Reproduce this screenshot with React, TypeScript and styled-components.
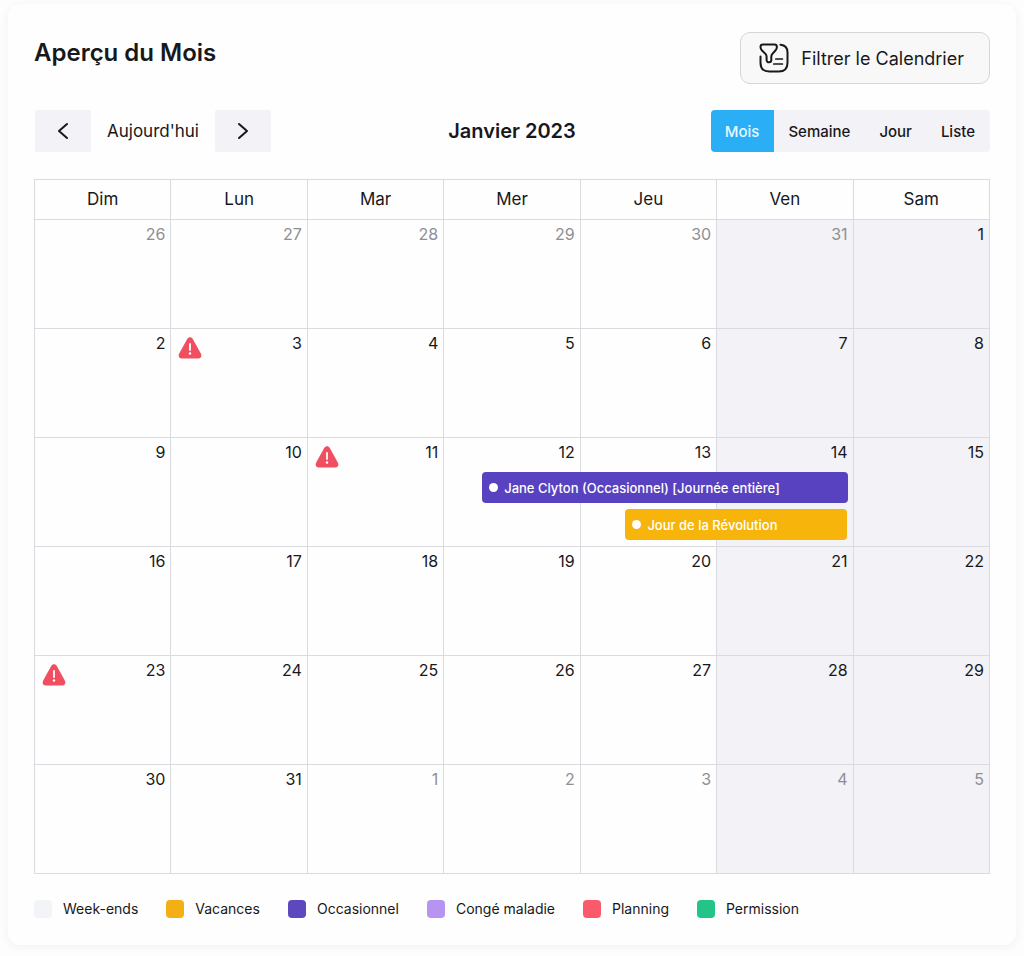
import React from "react";
import styled, { createGlobalStyle } from "styled-components";

const LINE = "#dadae1";
const SOFT = "#f2f2f7";
const INK = "#18181b";

const GlobalStyle = createGlobalStyle`
  * { box-sizing: border-box; }
  body {
    margin: 0;
    background: #fdfdfd;
    color: ${INK};
    font-family: Inter, "Liberation Sans", sans-serif;
  }
  button { font-family: inherit; color: inherit; cursor: pointer; }
`;

const Page = styled.div`
  padding: 4px 8px 10px;
`;

const Card = styled.main`
  padding: 28px 26px 26px;
  border-radius: 12px;
  background: #fefefe;
  box-shadow: 0 2px 10px rgba(0, 0, 0, 0.05);
`;

const Header = styled.header`
  display: flex;
  align-items: center;
  justify-content: space-between;
`;

const Title = styled.h1`
  margin: 0 0 10px;
  font-size: 24px;
  line-height: 32px;
  font-weight: 600;
`;

const FilterButton = styled.button`
  display: flex;
  align-items: center;
  gap: 12px;
  height: 52px;
  padding: 0 25px 0 18px;
  border: 1px solid #d6d6d9;
  border-radius: 10px;
  background: #f8f8f8;
  font-size: 18px;
`;

const Toolbar = styled.div`
  display: grid;
  grid-template-columns: 1fr auto 1fr;
  align-items: center;
  margin: 26px 0 27px;
`;

const Navigation = styled.div`
  display: flex;
  align-items: center;
  padding-left: 1px;
`;

const ArrowButton = styled.button`
  display: flex;
  align-items: center;
  justify-content: center;
  width: 56px;
  height: 42px;
  padding: 0;
  border: 0;
  border-radius: 2px;
  background: ${SOFT};
`;

const TodayButton = styled.button`
  height: 42px;
  padding: 0 16px;
  border: 0;
  background: none;
  font-size: 17px;
`;

const Period = styled.h2`
  margin: 0;
  font-size: 20px;
  line-height: 24px;
  font-weight: 600;
`;

const Views = styled.div`
  display: flex;
  justify-self: end;
  overflow: hidden;
  border-radius: 4px;
  background: ${SOFT};
`;

const ViewButton = styled.button<{ $active?: boolean }>`
  height: 42px;
  padding: 0 15px 0 14px;
  border: 0;
  background: ${(p) => (p.$active ? "#2aaef6" : "transparent")};
  color: ${(p) => (p.$active ? "#e6f8ff" : INK)};
  font-size: 15px;
  font-weight: 500;
`;

const Month = styled.table`
  width: 100%;
  table-layout: fixed;
  border-collapse: collapse;
`;

const DayName = styled.th`
  height: 40px;
  padding: 0 0 2px;
  border: 1px solid ${LINE};
  font-size: 17px;
  font-weight: 400;
`;

const DayCell = styled.td<{ $weekend: boolean }>`
  padding: 0;
  border: 1px solid ${LINE};
  background: ${(p) => (p.$weekend ? SOFT : "transparent")};
`;

const Day = styled.div`
  position: relative;
  height: 108px;
  padding: 3px 5px;
`;

const DayNumber = styled.div<{ $muted: boolean }>`
  text-align: right;
  font-size: 16px;
  line-height: 22px;
  color: ${(p) => (p.$muted ? "#8e8e96" : INK)};
`;

const Alert = styled.svg`
  position: absolute;
  top: 8px;
  left: 7px;
`;

const Event = styled.div<{ $color: string; $slot: number; $start: number; $span: number }>`
  position: absolute;
  z-index: 1;
  top: ${(p) => 34 + p.$slot * 37}px;
  left: ${(p) => p.$start}%;
  width: ${(p) => p.$span}%;
  display: flex;
  align-items: center;
  gap: 6px;
  height: 31px;
  padding: 0 7px;
  border-radius: 4px;
  background: ${(p) => p.$color};
  color: #fff;
  font-size: 13px;
  font-weight: 500;
  white-space: nowrap;
`;

const Dot = styled.span`
  width: 9px;
  height: 9px;
  border-radius: 50%;
  background: #fff;
`;

const Legend = styled.ul`
  display: flex;
  flex-wrap: wrap;
  gap: 12px 28px;
  margin: 25px 0 0;
  padding: 0;
  list-style: none;
`;

const LegendItem = styled.li`
  display: flex;
  align-items: center;
  gap: 11px;
  font-size: 14px;
  line-height: 20px;
`;

const Swatch = styled.span<{ $color: string }>`
  width: 18px;
  height: 18px;
  border-radius: 4px;
  background: ${(p) => p.$color};
`;

const dayNames = ["Dim", "Lun", "Mar", "Mer", "Jeu", "Ven", "Sam"];

const weeks = [
  [26, 27, 28, 29, 30, 31, 1],
  [2, 3, 4, 5, 6, 7, 8],
  [9, 10, 11, 12, 13, 14, 15],
  [16, 17, 18, 19, 20, 21, 22],
  [23, 24, 25, 26, 27, 28, 29],
  [30, 31, 1, 2, 3, 4, 5],
];

const alertDays = [3, 11, 23];

const events = [
  { day: 12, slot: 0, start: 28, span: 270, color: "#5842bf", label: "Jane Clyton (Occasionnel) [Journée entière]" },
  { day: 13, slot: 1, start: 33, span: 164, color: "#f7b50c", label: "Jour de la Révolution" },
];

const legend = [
  { label: "Week-ends", color: "#f3f4f7" },
  { label: "Vacances", color: "#f2b015" },
  { label: "Occasionnel", color: "#5d48bd" },
  { label: "Congé maladie", color: "#b894f2" },
  { label: "Planning", color: "#fb5a6a" },
  { label: "Permission", color: "#22c587" },
];

const FilterIcon = () => (
  <svg width="30" height="30" viewBox="0 0 30 30" fill="none" stroke={INK} strokeWidth="2" strokeLinecap="round" strokeLinejoin="round" aria-hidden="true">
    <path d="M4 1.500h11.400c1.500 0 2.500 1 2.500 2.400 0 1.500-.5 2.500-1.500 3.600l-3 3.400c-.8.900-1.100 1.700-1.100 2.800v3.300c0 1.400-1 2.300-2.300 2.300S7.600 18.400 7.600 17v-3.300c0-1.100-.4-1.900-1.100-2.800L3 7.500C2 6.400 1.500 5.400 1.500 3.900 1.500 2.500 2.500 1.500 4 1.500z" />
    <path d="M21.500 1.700c4.700.5 7 3.100 7 7.500v10.500c0 5.800-3 8.800-8.800 8.800h-9.400C4.500 28.500 1.500 25.500 1.500 19.700v-6.200" />
    <path d="M16.800 16h6.600M14.800 21h8.600" strokeWidth="1.700" />
  </svg>
);

const Chevron = ({ next }: { next?: boolean }) => (
  <svg width="18" height="18" viewBox="0 0 18 18" fill="none" stroke={INK} strokeWidth="2" strokeLinecap="round" strokeLinejoin="round" aria-hidden="true">
    <path d={next ? "M5 2l8 7-8 7" : "M13 2L5 9l8 7"} />
  </svg>
);

const AlertIcon = () => (
  <Alert width="24" height="22" viewBox="0 0 24 22" role="img" aria-label="Alerte">
    <path d="M9.200 1.900C10.500-.3 13.500-.3 14.800 1.900L22.800 16.500c1.300 2.400 0 5-2.600 5H3.800c-2.600 0-3.900-2.600-2.600-5z" fill="#f04f61" />
    <path d="M12 7v6" stroke="#fff" strokeWidth="1.800" strokeLinecap="round" />
    <circle cx="12" cy="16.500" r="1.200" fill="#fff" />
  </Alert>
);

export default function App() {
  return (
    <>
      <GlobalStyle />
      <Page>
        <Card>
          <Header>
            <Title>Aperçu du Mois</Title>
            <FilterButton type="button">
              <FilterIcon />
              Filtrer le Calendrier
            </FilterButton>
          </Header>
          <Toolbar>
            <Navigation>
              <ArrowButton type="button" aria-label="Mois précédent">
                <Chevron />
              </ArrowButton>
              <TodayButton type="button">Aujourd'hui</TodayButton>
              <ArrowButton type="button" aria-label="Mois suivant">
                <Chevron next />
              </ArrowButton>
            </Navigation>
            <Period>Janvier 2023</Period>
            <Views>
              <ViewButton type="button" $active>Mois</ViewButton>
              <ViewButton type="button">Semaine</ViewButton>
              <ViewButton type="button">Jour</ViewButton>
              <ViewButton type="button">Liste</ViewButton>
            </Views>
          </Toolbar>
          <Month>
            <thead>
              <tr>
                {dayNames.map((name) => (
                  <DayName key={name} scope="col">{name}</DayName>
                ))}
              </tr>
            </thead>
            <tbody>
              {weeks.map((week, w) => (
                <tr key={w}>
                  {week.map((day, d) => {
                    const muted = (w === 0 && day > 20) || (w === 5 && day < 10);
                    return (
                      <DayCell key={d} $weekend={d >= 5}>
                        <Day>
                          <DayNumber $muted={muted}>{day}</DayNumber>
                          {!muted && alertDays.includes(day) && <AlertIcon />}
                          {!muted &&
                            events
                              .filter((e) => e.day === day)
                              .map((e) => (
                                <Event key={e.label} $color={e.color} $slot={e.slot} $start={e.start} $span={e.span}>
                                  <Dot />
                                  {e.label}
                                </Event>
                              ))}
                        </Day>
                      </DayCell>
                    );
                  })}
                </tr>
              ))}
            </tbody>
          </Month>
          <Legend>
            {legend.map((item) => (
              <LegendItem key={item.label}>
                <Swatch $color={item.color} />
                {item.label}
              </LegendItem>
            ))}
          </Legend>
        </Card>
      </Page>
    </>
  );
}
